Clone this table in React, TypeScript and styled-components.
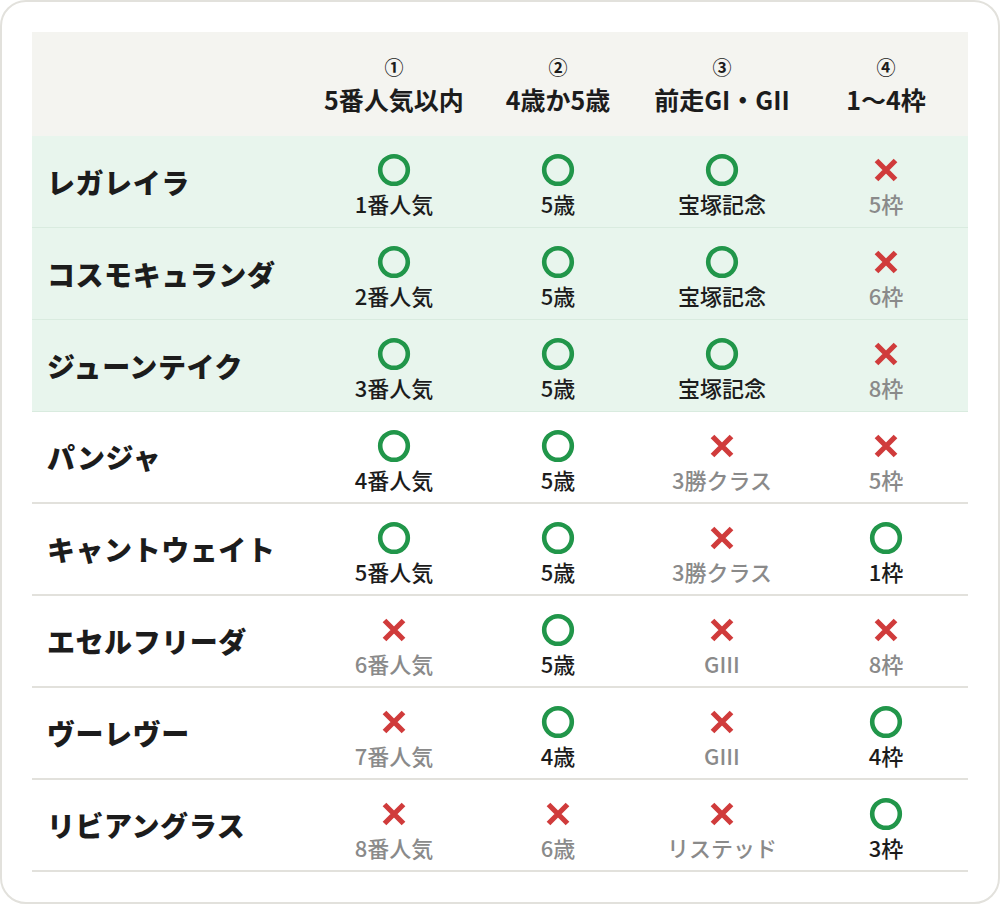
import React from "react";
import styled, { createGlobalStyle } from "styled-components";

const Global = createGlobalStyle`
  html, body { margin: 0; padding: 0; background: #ffffff; }
  body { font-family: "Noto Sans CJK JP", "Noto Sans", sans-serif; color: #1c1c1c; }
`;

const Card = styled.div`
  box-sizing: border-box;
  width: 1000px;
  height: 904px;
  border: 2px solid #e2e1dc;
  border-radius: 26px;
  padding: 30px;
  background: #ffffff;
`;

const Grid = styled.div`
  display: grid;
  grid-template-columns: 280px repeat(4, 164px);
`;

const HeadCell = styled.div`
  height: 104px;
  background: #f4f4f0;
  display: flex;
  flex-direction: column;
  align-items: center;
  justify-content: center;
  padding-top: 2px;
  box-sizing: border-box;
`;

const Circled = styled.div`
  font-size: 19px;
  line-height: 28px;
  font-weight: 700;
  color: #1c1c1c;
`;

const HeadTitle = styled.div`
  font-size: 25px;
  line-height: 36px;
  font-weight: 700;
  color: #1c1c1c;
  white-space: nowrap;
`;

const Row = styled.div<{ $hl: boolean }>`
  display: contents;
  & > div {
    height: 92px;
    box-sizing: border-box;
    background: ${(p) => (p.$hl ? "#e8f5ed" : "#ffffff")};
    border-bottom: ${(p) => (p.$hl ? "1px solid #d9ebdf" : "2px solid #e2e1dc")};
  }
`;

const NameCell = styled.div`
  display: flex;
  align-items: center;
  padding-left: 15px;
  font-size: 28px;
  font-weight: 900;
  color: #1c1c1c;
  letter-spacing: 0.02em;
  white-space: nowrap;
`;

const Cell = styled.div`
  display: flex;
  flex-direction: column;
  align-items: center;
  justify-content: center;
  padding-top: 8px;
  gap: 1px;
`;

const Mark = styled.div`
  width: 34px;
  height: 34px;
  display: flex;
  align-items: center;
  justify-content: center;
`;

const Label = styled.div<{ $ok: boolean }>`
  font-size: 22px;
  line-height: 30px;
  font-weight: 500;
  color: ${(p) => (p.$ok ? "#1c1c1c" : "#8a8a8a")};
  white-space: nowrap;
`;

const OkIcon = () => (
  <svg width="34" height="34" viewBox="0 0 34 34">
    <circle cx="17" cy="17" r="13.8" fill="none" stroke="#21964a" strokeWidth="4.6" />
  </svg>
);

const NgIcon = () => (
  <svg width="34" height="34" viewBox="0 0 34 34">
    <path d="M7.5 7.5 L26.5 26.5 M26.5 7.5 L7.5 26.5" stroke="#d03b3b" strokeWidth="5.2" strokeLinecap="butt" />
  </svg>
);

type C = [boolean, string];
type H = { name: string; hl: boolean; cells: C[] };

const headers = [
  ["①", "5番人気以内"],
  ["②", "4歳か5歳"],
  ["③", "前走GI・GII"],
  ["④", "1〜4枠"],
];

const horses: H[] = [
  { name: "レガレイラ", hl: true, cells: [[true, "1番人気"], [true, "5歳"], [true, "宝塚記念"], [false, "5枠"]] },
  { name: "コスモキュランダ", hl: true, cells: [[true, "2番人気"], [true, "5歳"], [true, "宝塚記念"], [false, "6枠"]] },
  { name: "ジューンテイク", hl: true, cells: [[true, "3番人気"], [true, "5歳"], [true, "宝塚記念"], [false, "8枠"]] },
  { name: "パンジャ", hl: false, cells: [[true, "4番人気"], [true, "5歳"], [false, "3勝クラス"], [false, "5枠"]] },
  { name: "キャントウェイト", hl: false, cells: [[true, "5番人気"], [true, "5歳"], [false, "3勝クラス"], [true, "1枠"]] },
  { name: "エセルフリーダ", hl: false, cells: [[false, "6番人気"], [true, "5歳"], [false, "GIII"], [false, "8枠"]] },
  { name: "ヴーレヴー", hl: false, cells: [[false, "7番人気"], [true, "4歳"], [false, "GIII"], [true, "4枠"]] },
  { name: "リビアングラス", hl: false, cells: [[false, "8番人気"], [false, "6歳"], [false, "リステッド"], [true, "3枠"]] },
];

export default function App() {
  return (
    <>
      <Global />
      <Card>
        <Grid>
          <HeadCell />
          {headers.map(([n, t]) => (
            <HeadCell key={t}>
              <Circled>{n}</Circled>
              <HeadTitle>{t}</HeadTitle>
            </HeadCell>
          ))}
          {horses.map((h) => (
            <Row key={h.name} $hl={h.hl}>
              <NameCell>{h.name}</NameCell>
              {h.cells.map(([ok, label], i) => (
                <Cell key={i}>
                  <Mark>{ok ? <OkIcon /> : <NgIcon />}</Mark>
                  <Label $ok={ok}>{label}</Label>
                </Cell>
              ))}
            </Row>
          ))}
        </Grid>
      </Card>
    </>
  );
}
